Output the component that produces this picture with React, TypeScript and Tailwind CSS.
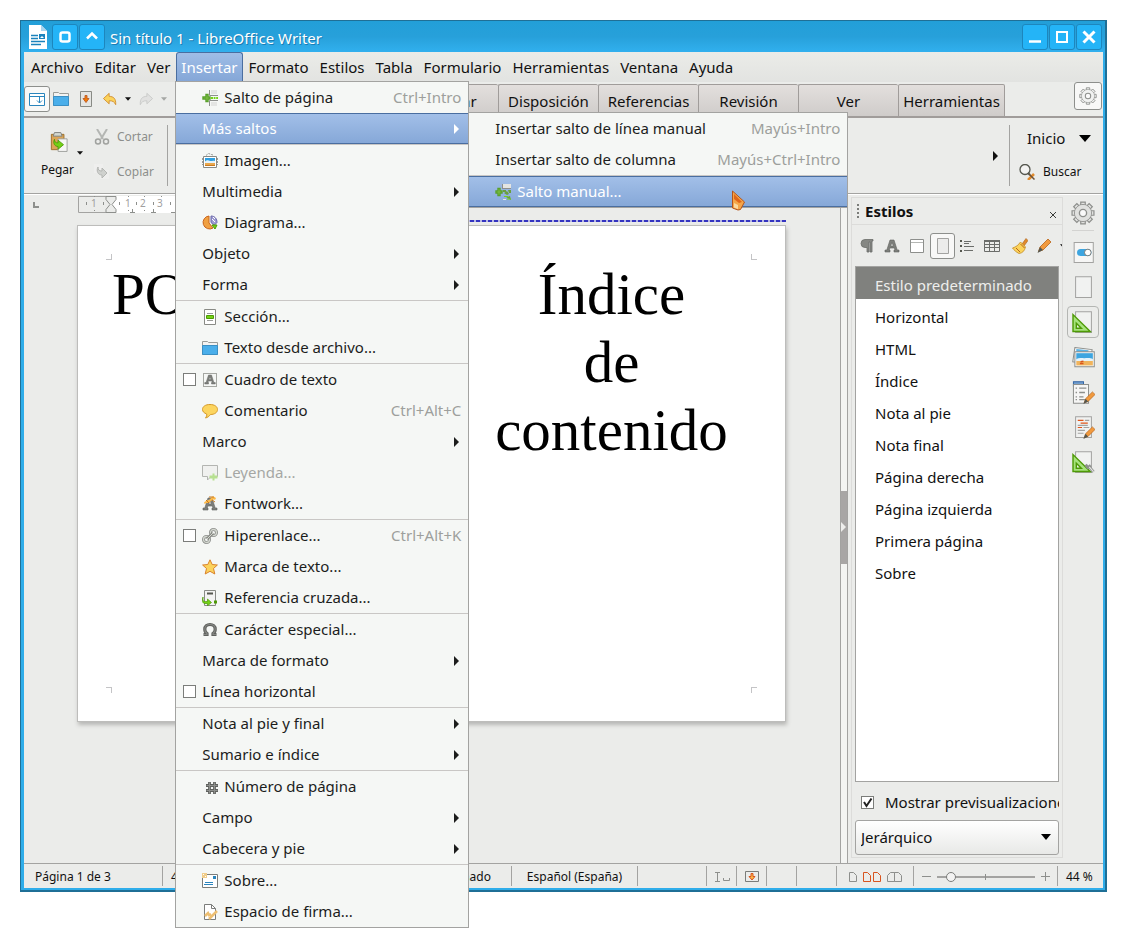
import type { ReactNode } from "react";
import clsx from "clsx";

type IconProps = { children: ReactNode; size?: number; className?: string };

const Icon = ({ children, size = 16, className }: IconProps) => (
  <svg
    width={size}
    height={size}
    viewBox="0 0 16 16"
    fill="none"
    aria-hidden="true"
    className={clsx("shrink-0", className)}
  >
    {children}
  </svg>
);

const PageBreakIcon = () => (
  <Icon>
    <path d="M7.500 0v5.500H16M7.500 16v-5.500H16" stroke="#8d8f8c" />
    <path d="M9 0h6v4H9zM9 12h6v4H9z" fill="#e4e5e3" />
    <path d="M4 4.500h2v2.500h2v2h-2v2.500H4V9H1V7h3z" fill="#8fd14f" stroke="#5aa02c" strokeWidth="1.400" />
    <path d="M9 7h2v2H9zM11.700 7h1.800v2h-1.800zM14.200 7H16v2h-1.800z" fill="#73d216" />
  </Icon>
);

const ManualBreakIcon = () => (
  <Icon>
    <path d="M8 0h8v4H8z" fill="#e4e5e3" />
    <path d="M7.500 0v5M8 4.500h8" stroke="#8d8f8c" />
    <path d="M8 6h3v2H8zM13 6h3v3h-2zM9 9l3-2 2 3-2 1zM8 12l3 1 5 3-1-4-3 1z" fill="#6a9f3d" />
    <path d="M8 15.500h3" stroke="#e4e5e3" />
    <path d="M9 12.500h4M12 15h4" stroke="#73d216" />
    <path d="M3 4.500h2v2.500h2v2H5v2.500H3V9H1V7h2z" fill="#8fd14f" stroke="#5aa02c" strokeWidth="1.400" />
  </Icon>
);

const ImageIcon = () => (
  <Icon>
    <path d="M4 2.500L6.500.5 11 2M.5 5v7M15.500 5v7" stroke="#9a9c99" strokeDasharray="2 1" />
    <path d="M1.500 3.500h13v11h-13z" fill="#fff" stroke="#888a85" />
    <path d="M3 5h10v4H3z" fill="#2e9fe0" />
    <path d="M3 10h10v3H3z" fill="#e9a84e" />
    <path d="M3 8.500c2-2 4-1 5-.5s3-1 5 0V10H3z" fill="#e4f3fb" />
    <path d="M3 12.500h10" stroke="#c97a1e" />
  </Icon>
);

const ChartIcon = () => (
  <Icon>
    <path d="M7 1v7l4 5a6.500 6.500 0 1 1-4-12z" fill="#f0a042" stroke="#c9641c" />
    <path d="M9 1c4 0 6 3 6 6.500-1 1.500-2 2-3 2.500L9 7.500z" fill="#9d9bd0" stroke="#6a68ab" />
    <path d="M11 2l2 2M10 4l3 3" stroke="#fff" />
    <path d="M10 10h5l-2 4z" fill="#73d216" stroke="#4e9a06" />
  </Icon>
);

const SectionIcon = () => (
  <Icon>
    <path d="M2.500.5h11v15h-11z" fill="#fff" stroke="#888a85" />
    <path d="M5 4.500h6M5 11.500h6" stroke="#9a9c99" />
    <path d="M4.500 6.500h7v3h-7z" fill="#73d216" stroke="#4e9a06" />
  </Icon>
);

const FolderIcon = () => (
  <Icon>
    <path d="M.5 14.500v-13h5l1 1h9v12z" fill="#f3f3f2" stroke="#9a9c99" />
    <path d="M.5 5.500h15v9H.5z" fill="#4aaeea" stroke="#3a8fc4" />
  </Icon>
);

const LetterA = () => (
  <path
    fillRule="evenodd"
    d="M6 2h4l3.200 10H15v2h-5v-2h1l-.6-2H5.800l-.6 2H6v2H1v-2h1.800zM8 4.500L6.600 8h2.800z"
    fill="#7d7f7b"
    stroke="#5f615e"
    strokeWidth=".6"
  />
);

const TextBoxIcon = () => (
  <Icon>
    <path d="M1.500 1.500h13v13h-13z" stroke="#55574f" strokeDasharray="1 1" />
    <g transform="translate(2 1.500) scale(.75)">
      <LetterA />
    </g>
  </Icon>
);

const CommentIcon = () => (
  <Icon>
    <path
      d="M8 1.500c4.500 0 7.500 2 7.500 5s-3 5-7 5c-1.500 2-3 3-5 3.500 1-1.500 1.500-2.500 1.200-4C2 10 .5 8.500.5 6.500c0-3 3-5 7.500-5z"
      fill="#fcd55f"
      stroke="#d59a2b"
    />
  </Icon>
);

const CaptionIcon = () => (
  <Icon className="opacity-60">
    <path d="M.5.500h15v11H9l-3.500 3.500v-3.500h-5z" fill="#eeeeec" stroke="#888a85" />
    <path d="M10.500 8.500h2v2h3v3h-3v2h-2v-2h-3v-3h3z" fill="#8fd14f" />
  </Icon>
);

const FontworkIcon = () => (
  <Icon>
    <LetterA />
    <path d="M2 7C3 4 7 5 9 2s3-1 5 0l-1 2c-2-1-3 0-5 2S4 6 3 8z" fill="#fbb848" />
    <path d="M7 1h5M4 4l3 3M10 4l3 2" stroke="#c97a1e" />
  </Icon>
);

const LinkIcon = () => (
  <Icon>
    <circle cx="11.500" cy="4.500" r="3" stroke="#8d8f8c" strokeWidth="3" />
    <circle cx="4.500" cy="11.500" r="3" stroke="#8d8f8c" strokeWidth="3" />
    <circle cx="11.500" cy="4.500" r="3" stroke="#d3d7cf" strokeWidth="1.300" />
    <circle cx="4.500" cy="11.500" r="3" stroke="#d3d7cf" strokeWidth="1.300" />
    <path d="M5 11l6-6" stroke="#888a85" strokeWidth="3" />
    <path d="M5 11l6-6" stroke="#d3d7cf" />
  </Icon>
);

const StarIcon = () => (
  <Icon>
    <path
      d="M8 .8l2.200 4.700 5.200.5-3.900 3.500 1.300 5.500L8 12.300 3.200 15l1.300-5.500L.6 6l5.200-.5z"
      fill="#fbd35c"
      stroke="#d9822b"
      strokeLinejoin="round"
    />
  </Icon>
);

const CrossRefIcon = () => (
  <Icon>
    <path d="M2.500.5h11v15h-11z" fill="#f3f3f2" stroke="#888a85" />
    <path d="M5 3.500h6" stroke="#55574f" strokeWidth="2" />
    <path
      d="M1 7v2.500c0 1.500 1 2 2.500 2h2V9l4 3.500-4 3.300v-2.300H3C1 13.500.3 12 .5 9z"
      fill="#73d216"
      stroke="#4e9a06"
      strokeWidth=".7"
    />
    <path d="M12 10.500h3v3h-3z" fill="#4e9a06" />
  </Icon>
);

const OmegaIcon = () => (
  <Icon>
    <path
      d="M1.500 12.500h3.500v-1C3.500 10.500 2.800 9 2.800 7.200 2.800 4.300 5 2.500 8 2.500s5.200 1.800 5.200 4.700c0 1.800-.7 3.300-2.200 4.300v1h3.500"
      stroke="#5f615e"
      strokeWidth="3.200"
    />
    <path
      d="M2 12.500h3v-1C3.500 10.500 2.800 9 2.800 7.200 2.800 4.300 5 2.500 8 2.500s5.200 1.800 5.200 4.700c0 1.800-.7 3.300-2.200 4.300v1h3"
      stroke="#858783"
      strokeWidth="1.200"
    />
  </Icon>
);

const HashIcon = () => (
  <Icon>
    <path d="M7.500 3v12M12.500 3v12M4 6.500h12M4 11.500h12" stroke="#5f615e" strokeWidth="2.800" />
    <path d="M7.500 3.500v11M12.500 3.500v11M4.500 6.500h11M4.500 11.500h11" stroke="#8d8f8c" />
  </Icon>
);

const EnvelopeIcon = () => (
  <Icon>
    <path d="M.5 1.500h15v13H.5z" fill="#fff" stroke="#7b7d7a" />
    <path d="M0 0h5v5H0z" fill="#f1cd8a" />
    <path d="M1 1h1v1H1zM3 3h1v1H3z" fill="#fff" />
    <path d="M11 3h3v3h-3z" fill="#2a85bd" />
    <path d="M3 9.500h8M2 11.500h9" stroke="#2a85bd" />
  </Icon>
);

const SignatureIcon = () => (
  <Icon>
    <path d="M2.500 15.500V.5h7l4 4v11z" fill="#fff" stroke="#7b7d7a" />
    <path d="M9.500.5v4h4" stroke="#7b7d7a" />
    <path d="M3 12l3-3 1 2 2-1M7 15l8-8" stroke="#edbf72" strokeWidth="2.500" />
  </Icon>
);

const LayoutIcon = () => (
  <Icon>
    <path d="M.5 2.500h15v12H.5z" fill="#fff" stroke="#2a85bd" />
    <path d="M1 5.500h14M10.500 5v7M8 9.500l2.500 2.500L13 9.500" stroke="#2a85bd" />
  </Icon>
);

const SaveIcon = () => (
  <Icon>
    <path d="M2.500.5h11v15h-11z" fill="#e4e5e3" stroke="#888a85" />
    <path d="M7 4.500h2v3h2L8 11.500l-3-4h2z" fill="#f57900" stroke="#c0622c" />
  </Icon>
);

const UndoIcon = ({ className }: { className?: string }) => (
  <Icon size={14} className={className}>
    <path
      d="M7 1.500v3.500c5 0 8 2.500 7.500 9.500-1.500-3.500-3.500-4.500-7.500-4.500v3.500l-6.500-6z"
      fill="#fbd35c"
      stroke="#d08a2a"
    />
  </Icon>
);

const GearIcon = ({ size = 18, fill = "#f1f2f1" }: { size?: number; fill?: string }) => (
  <Icon size={size}>
    {[0, 45, 90, 135].map((a) => (
      <path
        key={a}
        d="M6.500.7h3v14.600h-3z"
        fill={fill}
        stroke="#8d8f8c"
        strokeWidth=".8"
        transform={`rotate(${a} 8 8)`}
      />
    ))}
    <circle cx="8" cy="8" r="5.700" fill={fill} stroke="#8d8f8c" strokeWidth=".6" />
    <circle cx="8" cy="8" r="5.300" fill={fill} />
    <circle cx="8" cy="8" r="2.400" fill="#fafafa" stroke="#8d8f8c" strokeWidth=".9" />
  </Icon>
);

const PencilShape = () => (
  <>
    <path d="M12 1l3 3-8 8-4.500 1.500L4 9z" fill="#f19a3e" stroke="#b8651b" strokeWidth=".8" />
    <path d="M4 9l3 3-5.500 3z" fill="#55574f" />
  </>
);

const PaintIcon = () => (
  <Icon>
    <path d="M10 6l4-5.500 2 2L12 8z" fill="#e08a2c" stroke="#a9601a" strokeWidth=".6" />
    <path
      d="M8.500 4l5 5c-1 4-3 6-6.500 6.500C4 14 2 12 .5 10 4 9 6.500 7 8.500 4z"
      fill="#fbd35c"
      stroke="#c48c20"
      strokeWidth=".8"
    />
    <path d="M8.500 6l4 4M4 10l4 4" stroke="#b8651b" />
  </Icon>
);

const Caret = ({ className }: { className?: string }) => (
  <svg viewBox="0 0 10 6" width="6" height="4" className={clsx("shrink-0", className)} aria-hidden="true">
    <path d="M0 0h10L5 6z" fill="currentColor" />
  </svg>
);

const Arrow = () => (
  <svg viewBox="0 0 5 10" width="5" height="10" className="shrink-0" aria-hidden="true">
    <path d="M0 0l5 5-5 5z" fill="currentColor" />
  </svg>
);

type Entry = {
  label: string;
  icon?: ReactNode;
  check?: boolean;
  shortcut?: string;
  sub?: boolean;
  active?: boolean;
  disabled?: boolean;
};

const insertGroups: Entry[][] = [
  [
    { label: "Salto de página", icon: <PageBreakIcon />, shortcut: "Ctrl+Intro" },
    { label: "Más saltos", sub: true, active: true },
  ],
  [
    { label: "Imagen...", icon: <ImageIcon /> },
    { label: "Multimedia", sub: true },
    { label: "Diagrama...", icon: <ChartIcon /> },
    { label: "Objeto", sub: true },
    { label: "Forma", sub: true },
  ],
  [
    { label: "Sección...", icon: <SectionIcon /> },
    { label: "Texto desde archivo...", icon: <FolderIcon /> },
  ],
  [
    { label: "Cuadro de texto", icon: <TextBoxIcon />, check: true },
    { label: "Comentario", icon: <CommentIcon />, shortcut: "Ctrl+Alt+C" },
    { label: "Marco", sub: true },
    { label: "Leyenda...", icon: <CaptionIcon />, disabled: true },
    { label: "Fontwork...", icon: <FontworkIcon /> },
  ],
  [
    { label: "Hiperenlace...", icon: <LinkIcon />, check: true, shortcut: "Ctrl+Alt+K" },
    { label: "Marca de texto...", icon: <StarIcon /> },
    { label: "Referencia cruzada...", icon: <CrossRefIcon /> },
  ],
  [
    { label: "Carácter especial...", icon: <OmegaIcon /> },
    { label: "Marca de formato", sub: true },
    { label: "Línea horizontal", check: true },
  ],
  [
    { label: "Nota al pie y final", sub: true },
    { label: "Sumario e índice", sub: true },
  ],
  [
    { label: "Número de página", icon: <HashIcon /> },
    { label: "Campo", sub: true },
    { label: "Cabecera y pie", sub: true },
  ],
  [
    { label: "Sobre...", icon: <EnvelopeIcon /> },
    { label: "Espacio de firma...", icon: <SignatureIcon /> },
  ],
];

const breakGroups: Entry[][] = [
  [
    { label: "Insertar salto de línea manual", shortcut: "Mayús+Intro" },
    { label: "Insertar salto de columna", shortcut: "Mayús+Ctrl+Intro" },
  ],
  [{ label: "Salto manual...", icon: <ManualBreakIcon />, active: true }],
];

const MenuRow = ({ entry }: { entry: Entry }) => (
  <button
    type="button"
    disabled={entry.disabled}
    className={clsx(
      "flex h-[31px] w-full items-center px-[7px] text-left",
      entry.active && "border-y border-[#4a6ea0] bg-linear-to-b from-[#a2bfe8] to-[#86a8d8] text-white",
      entry.disabled && "text-[#a5a7a4]"
    )}
  >
    <span className="w-[19px] shrink-0">
      {entry.check && <span className="block size-[13px] border border-[#7b7d7a] bg-white" />}
    </span>
    {entry.icon && <span className="mr-[6px]">{entry.icon}</span>}
    <span className="grow">{entry.label}</span>
    {entry.shortcut && <span className="text-[#9d9f9c]">{entry.shortcut}</span>}
    {entry.sub && (
      <span className="pr-[2px]">
        <Arrow />
      </span>
    )}
  </button>
);

const Menu = ({ groups, className }: { groups: Entry[][]; className?: string }) => (
  <div
    className={clsx(
      "absolute z-10 divide-y divide-[#c9c7c5] border border-[#a3a3a1] bg-[#f5f7f5] whitespace-nowrap text-[#1c1d1c]",
      className
    )}
  >
    {groups.map((group) => (
      <div key={group[0].label}>
        {group.map((entry) => (
          <MenuRow key={entry.label} entry={entry} />
        ))}
      </div>
    ))}
  </div>
);

const TitleButton = ({ label, children }: { label: string; children: ReactNode }) => (
  <button
    type="button"
    aria-label={label}
    className="flex h-[26px] w-[26px] items-center justify-center rounded-[3px] border border-[#1d86bd] bg-[#24b4f7]"
  >
    <svg width="16" height="16" viewBox="0 0 16 16" fill="none" stroke="#fff" strokeWidth="2" aria-hidden="true">
      {children}
    </svg>
  </button>
);

const TitleBar = () => (
  <header className="flex h-[31px] items-center gap-px bg-linear-to-b from-[#229fd8] via-[#27a0da] to-[#31b0ee] pr-[3px] text-white">
    <svg width="18" height="24" viewBox="0 0 18 24" fill="none" className="mr-[4px] ml-[8px]" aria-hidden="true">
      <path d="M0 0h12l6 6v18H0z" fill="#fff" />
      <path d="M12 0l6 6h-6z" fill="#a8d4ee" />
      <path d="M2 10.500h7M2 13.500h7M2 16.500h14M2 19.500h10" stroke="#1b83bd" strokeWidth="1.500" />
      <path d="M10 9h6v5h-6z" fill="#1b83bd" />
      <path d="M11 13l2-2 2 2z" fill="#fff" />
    </svg>
    <TitleButton label="Fijar">
      <rect x="3.500" y="3.500" width="9" height="9" rx="2" strokeWidth="2.500" />
    </TitleButton>
    <TitleButton label="Plegar">
      <path d="M3 9.500l5-5 5 5" strokeWidth="2.500" />
    </TitleButton>
    <h1 className="grow pt-[3px] pl-[4px] [text-shadow:1px_1px_0_#1a7db3]">Sin título 1 - LibreOffice Writer</h1>
    <TitleButton label="Minimizar">
      <path d="M2 12.500h12" strokeWidth="2.500" />
    </TitleButton>
    <TitleButton label="Maximizar">
      <rect x="3" y="3" width="10" height="10" />
    </TitleButton>
    <TitleButton label="Cerrar">
      <path d="M2.500 2.500l11 11M13.500 2.500l-11 11" strokeWidth="3" />
    </TitleButton>
  </header>
);

const menus = [
  "Archivo",
  "Editar",
  "Ver",
  "Insertar",
  "Formato",
  "Estilos",
  "Tabla",
  "Formulario",
  "Herramientas",
  "Ventana",
  "Ayuda",
];

const MenuBar = () => (
  <nav className="flex h-[30px] gap-px bg-linear-to-b from-[#ebece8] to-[#e2e3e1] pl-[2px]">
    {menus.map((name) => {
      const open = name === "Insertar";
      return (
        <div key={name} className="relative">
          <button
            type="button"
            className={clsx(
              "h-full",
              open
                ? "rounded-t-[3px] border border-b-0 border-[#4a6ea0] bg-linear-to-b from-[#9fbde6] to-[#84a6d7] px-[4px] text-white"
                : "px-[5px]"
            )}
          >
            {name}
          </button>
          {open && (
            <>
              <Menu groups={insertGroups} className="top-[29px] -left-px w-[294px]" />
              <Menu groups={breakGroups} className="top-[60px] left-[292px] w-[380px]" />
            </>
          )}
        </div>
      );
    })}
  </nav>
);

const tabs = ["Insertar", "Disposición", "Referencias", "Revisión", "Ver"];

const tabStyle =
  "h-[34px] shrink-0 rounded-t-[2px] border border-b-2 border-[#a09c9a] bg-linear-to-b from-[#e3dfdd] to-[#cfccca] pt-[2px]";

const TabRow = () => (
  <div className="flex h-[36px] items-end shadow-[inset_0_-2px_0_#a09c9a]">
    <div className="flex h-full w-[374px] shrink-0 items-center pb-[2px]">
      <button
        type="button"
        aria-label="Diseño"
        className="flex size-[26px] items-center justify-center rounded-[3px] border border-[#8d8f8c] bg-[#f8f8f7]"
      >
        <LayoutIcon />
      </button>
      <button type="button" aria-label="Abrir" className="ml-[3px]">
        <FolderIcon />
      </button>
      <button type="button" aria-label="Guardar" className="ml-[9px]">
        <SaveIcon />
      </button>
      <button type="button" aria-label="Deshacer" className="ml-[9px] flex items-center gap-[8px]">
        <UndoIcon />
        <Caret />
      </button>
      <button type="button" aria-label="Rehacer" className="ml-[8px] flex items-center gap-[8px] text-[#a5a7a4]">
        <UndoIcon className="-scale-x-100 opacity-40 grayscale" />
        <Caret />
      </button>
    </div>
    {tabs.map((tab) => (
      <button key={tab} type="button" className={clsx(tabStyle, "w-[100px] border-r-0")}>
        {tab}
      </button>
    ))}
    <button type="button" className={clsx(tabStyle, "w-[107px]")}>
      Herramientas
    </button>
    <button
      type="button"
      aria-label="Opciones"
      className="mr-px mb-auto ml-auto flex size-[28px] items-center justify-center rounded-[3px] border border-[#8d8f8c] bg-[#f8f8f7]"
    >
      <GearIcon />
    </button>
  </div>
);

const Toolbar = () => (
  <div className="flex h-[76px] border-b border-[#a3a3a1] py-[7px] text-[12px] shadow-[0_1px_0_#fff]">
    <button type="button" className="relative ml-[12px] flex w-[43px] flex-col items-center pt-[6px]">
      <svg width="18" height="22" viewBox="0 0 20 24" fill="none" className="ml-[2px]" aria-hidden="true">
        <path d="M1.500 3.500h14v17h-14z" fill="#dca557" stroke="#9a6b24" />
        <path d="M5 1.500h7l1.500 4h-10z" fill="#d3d7cf" stroke="#7b7d7a" />
        <path d="M9 8.500h10v14H9z" fill="#f6f6f5" stroke="#9a9c99" />
        <path d="M5 9c0 3 1 4 4 4v-3l6 5-6 5v-3c-4 0-6-4-4-8z" fill="#73d216" stroke="#4e9a06" />
      </svg>
      <span className="mt-[8px]">Pegar</span>
      <Caret className="absolute top-[26px] right-[-4px]" />
    </button>
    <div className="flex w-[88px] flex-col justify-between pt-[3px] pb-[5px] pl-[15px] text-[#8d8f8c]">
      <button type="button" disabled className="flex items-center gap-[7px]">
        <Icon>
          <path d="M3 0l6 10M13 0L7 10" stroke="#b4b6b3" strokeWidth="2" />
          <circle cx="4" cy="12.500" r="2.500" stroke="#a0a29f" strokeWidth="1.500" />
          <circle cx="12" cy="12.500" r="2.500" stroke="#a0a29f" strokeWidth="1.500" />
        </Icon>
        Cortar
      </button>
      <button type="button" disabled className="flex items-center gap-[7px]">
        <Icon>
          <path d="M0 0h9v9H0zM6 6h9v9H6z" fill="#efefee" />
          <path d="M4 3c0 3 1 4 4 4V4l5 5-5 5v-3C4 11 2 7 4 3z" fill="#cfd1ce" stroke="#b4b6b3" />
        </Icon>
        Copiar
      </button>
    </div>
    <div className="w-px bg-[#a3a3a1]" />
    <button type="button" aria-label="Más" className="ml-auto">
      <Arrow />
    </button>
    <div className="mr-[9px] ml-[11px] w-px bg-[#a3a3a1]" />
    <div className="flex w-[84px] flex-col justify-between">
      <button type="button" className="flex items-center justify-between pt-[2px] pr-[12px] pl-[8px] text-[15px]">
        Inicio
        <svg width="12" height="7" viewBox="0 0 12 7" aria-hidden="true">
          <path d="M0 0h12L6 7z" />
        </svg>
      </button>
      <button type="button" className="flex items-center gap-[8px] pb-[5px]">
        <Icon>
          <circle cx="6" cy="5.500" r="5" fill="#f3f3f2" stroke="#55574f" strokeWidth="1.300" />
          <path d="M9 9l2 2" stroke="#55574f" strokeWidth="2" />
          <path d="M9 16l6-6" stroke="#e08a2c" strokeWidth="2.500" />
          <path d="M10 10l5.500 5.500" stroke="#6b5138" strokeWidth="1.500" />
        </Icon>
        Buscar
      </button>
    </div>
  </div>
);

const Ruler = () => (
  <svg width="340" height="18" className="block" aria-hidden="true">
    <path d="M0 0h340v17H0z" fill="#fff" />
    <path d="M.5.5h32v16H.5z" fill="#ebecea" stroke="#a3a3a1" />
    <path d="M28 .5h10v3l-4 5 4 5v3H28v-3l4-5-4-5z" fill="#ebecea" stroke="#8d8f8c" />
    <path d="M8.500 6v3M25.500 6v3M41.500 6v3M58.500 6v3M75.500 6v3M92.500 6v3" stroke="#8d8f8c" />
    <path
      d="M16.500 0v1M16.500 14v1M50.500 0v1M66.500 0v1M83.500 0v1M50.500 14v1M66.500 14v1M52 16.500h5M54.500 13v3M73 16.500h5M75.500 13v3M93 16.500h5"
      stroke="#8d8f8c"
    />
    <g fontSize="10" fill="#a09e9e">
      <text x="13" y="11">1</text>
      <text x="47" y="11">1</text>
      <text x="62" y="11">2</text>
      <text x="79" y="11">3</text>
    </g>
  </svg>
);

const Corner = ({ className }: { className: string }) => (
  <span className={clsx("absolute size-[6px] border-[#c4c4c6]", className)} />
);

const Document = () => (
  <main className="min-w-0 grow border-r border-[#a3a3a1]">
    <div className="flex gap-[39px] pt-px pl-[9px]">
      <span className="mt-[6px] size-[6px] border-b-2 border-l-2 border-[#8d8f8c]" />
      <Ruler />
    </div>
    <div className="ml-[53px] w-[709px]">
      <div className="mt-[6px] ml-auto h-[2px] w-[340px] bg-[repeating-linear-gradient(90deg,#3434c0_0px,#3434c0_4px,#b9b9e4_4px,#b9b9e4_6px)]" />
      <article className="mt-[3px] h-[497px] border border-[#bdbdbb] bg-white px-[34px] py-[34px] font-['Liberation_Serif',serif] text-[59px] leading-[68px] text-black shadow-[1px_3px_4px_#b8b8b6]">
        <div className="relative flex h-full">
          <Corner className="-top-[6px] -left-[6px] border-r border-b" />
          <Corner className="-top-[6px] -right-[6px] border-b border-l" />
          <Corner className="-bottom-[6px] -left-[6px] border-t border-r" />
          <Corner className="-right-[6px] -bottom-[6px] border-t border-l" />
          <p className="w-[360px]">PO</p>
          <p className="grow text-center">
            Índice
            <br />
            de
            <br />
            contenido
          </p>
        </div>
      </article>
    </div>
  </main>
);

const pageStyles = [
  "Estilo predeterminado",
  "Horizontal",
  "HTML",
  "Índice",
  "Nota al pie",
  "Nota final",
  "Página derecha",
  "Página izquierda",
  "Primera página",
  "Sobre",
];

const StyleKinds = () => (
  <div className="flex h-[41px] items-center overflow-hidden pl-[7px]">
    <button type="button" aria-label="Estilos de párrafo" className="flex w-[25px] shrink-0">
      <Icon>
        <path
          d="M6 1.500h8v1.500h-1V14h-2V4h-1v10H8V9.500H6a4 4 0 0 1 0-8z"
          fill="#858783"
          stroke="#6b6d6a"
          strokeWidth=".8"
        />
      </Icon>
    </button>
    <button type="button" aria-label="Estilos de caracteres" className="flex w-[25px] shrink-0">
      <Icon>
        <LetterA />
      </Icon>
    </button>
    <button type="button" aria-label="Estilos de marcos" className="flex w-[21px] shrink-0">
      <Icon>
        <path d="M1.500 1.500h13v13h-13z" fill="#fff" stroke="#8d8f8c" />
        <path d="M2 4.500h12" stroke="#b4b6b3" />
      </Icon>
    </button>
    <button
      type="button"
      aria-label="Estilos de página"
      aria-pressed="true"
      className="mr-[4px] flex h-[26px] w-[25px] shrink-0 items-center justify-center rounded-[3px] border border-[#8d8f8c] bg-[#f8f8f7]"
    >
      <Icon>
        <path d="M2.500.5h11v15h-11z" fill="#ececeb" stroke="#a3a3a1" />
      </Icon>
    </button>
    <button type="button" aria-label="Estilos de lista" className="flex w-[25px] shrink-0">
      <Icon>
        <path d="M1 3h2M1 8h2M1 13h2" stroke="#55574f" strokeWidth="2" />
        <path d="M5 3.500h7M5 5.500h5M5 8.500h10M5 12.500h9" stroke="#6b6d6a" />
      </Icon>
    </button>
    <button type="button" aria-label="Estilos de tabla" className="mr-[3px] flex w-[25px] shrink-0">
      <Icon>
        <path d="M.5 2.500h15v11H.5zM5.500 3v10M10.500 3v10M1 6.500h14M1 9.500h14" stroke="#6b6d6a" />
        <path d="M0 2h16v2H0z" fill="#6b6d6a" />
      </Icon>
    </button>
    <button type="button" aria-label="Modo relleno" className="flex w-[24px] shrink-0">
      <PaintIcon />
    </button>
    <button type="button" aria-label="Acciones de estilo" className="flex shrink-0 items-center gap-[8px]">
      <Icon>
        <PencilShape />
      </Icon>
      <Caret />
    </button>
  </div>
);

const StylesPanel = () => (
  <section className="mt-[2px] mb-[5px] ml-[3px] flex w-[212px] flex-col border border-[#dcdcda]">
    <header className="flex h-[27px] items-center border-b border-[#dcdcda] px-[5px]">
      <span className="mr-[6px] h-[14px] border-l-2 border-dotted border-[#7b7d7a]" />
      <h2 className="grow font-bold">Estilos</h2>
      <button type="button" aria-label="Cerrar panel" className="pt-[8px]">
        <svg width="8" height="8" viewBox="0 0 8 8" stroke="#3a3c39" aria-hidden="true">
          <path d="M1 1l6 6M7 1L1 7" />
        </svg>
      </button>
    </header>
    <StyleKinds />
    <ul className="mx-[3px] grow border border-[#a3a3a1] bg-white">
      {pageStyles.map((name, i) => (
        <li key={name}>
          <button
            type="button"
            className={clsx("h-[32px] w-full pt-[5px] pl-[19px] text-left", i === 0 && "bg-[#80817e] text-[#eeeeec]")}
          >
            {name}
          </button>
        </li>
      ))}
    </ul>
    <label className="mx-[3px] flex h-[38px] items-center overflow-hidden pt-[3px] pl-[6px] whitespace-nowrap">
      <input
        type="checkbox"
        defaultChecked
        className="peer size-[13px] shrink-0 appearance-none border border-[#7b7d7a] bg-white"
      />
      <svg
        width="13"
        height="13"
        viewBox="0 0 13 13"
        fill="none"
        className="-ml-[13px] hidden shrink-0 peer-checked:block"
        aria-hidden="true"
      >
        <path d="M3 6l2.500 4L10.500 2.500" stroke="#222" strokeWidth="2" />
      </svg>
      <span className="pl-[11px]">Mostrar previsualizaciones</span>
    </label>
    <div className="relative mx-[3px] mb-[2px]">
      <select
        aria-label="Filtro de estilos"
        className="h-[35px] w-full appearance-none rounded-[3px] border border-[#a3a3a1] bg-linear-to-b from-white to-[#e8e9e7] pl-[5px]"
      >
        <option>Jerárquico</option>
      </select>
      <svg width="10" height="6" viewBox="0 0 10 6" className="absolute top-[14px] right-[8px]" aria-hidden="true">
        <path d="M0 0h10L5 6z" />
      </svg>
    </div>
  </section>
);

const Sheet = () => <path d="M2.500.5h11v14.500h-11z" fill="#f1f2f1" stroke="#a3a3a1" strokeWidth=".7" />;

const SetSquare = () => (
  <path fillRule="evenodd" d="M.7 2.500v11.800h12zM3 8.500l3.500 3.500H3z" fill="#a6e27c" stroke="#4e9a06" />
);

const SmallPencil = () => (
  <g transform="translate(7 7) scale(.6)">
    <PencilShape />
  </g>
);

const deckIcons = [
  {
    label: "Propiedades",
    art: (
      <>
        <path d="M1.500 1h13.300v14H1.500z" fill="#f6f6f5" stroke="#a3a3a1" strokeWidth=".7" />
        <rect x="3.500" y="5.500" width="10" height="5" rx="2.500" fill="#3da5e0" />
        <circle cx="11" cy="8" r="2.300" fill="#fff" stroke="#6b6d6a" strokeWidth=".6" />
      </>
    ),
  },
  { label: "Página", art: <Sheet /> },
  {
    label: "Estilos",
    active: true,
    art: (
      <>
        <Sheet />
        <SetSquare />
      </>
    ),
  },
  {
    label: "Galería",
    art: (
      <>
        <path d="M2 1l12 1.500-1.500 10L.5 11z" fill="#f6f6f5" stroke="#8d8f8c" strokeWidth=".7" />
        <path d="M3 2l8.500 1-.5 2H3z" fill="#5ab4e6" />
        <path d="M2 4h13.500v10.500H2z" fill="#f6f6f5" stroke="#8d8f8c" strokeWidth=".7" />
        <path d="M3 5h11.500v4.500H3z" fill="#3da5e0" />
        <path d="M3 10h11.500v3.500H3z" fill="#f0b45c" />
        <path d="M3 9c2-1 4-.5 5.500-.5s4-.5 6 .5v1.500H3z" fill="#e4f3fb" />
        <path d="M6 11l2-.5M5.500 12.200h2.500" stroke="#d9541e" />
      </>
    ),
  },
  {
    label: "Navegador",
    art: (
      <>
        <path d="M1 .5h7v3H1z" fill="#729fcf" stroke="#3465a4" strokeWidth=".7" />
        <path d="M1 2.500h10.500v13H1z" fill="#f6f6f5" stroke="#8d8f8c" strokeWidth=".7" />
        <path
          d="M2.500 5h1M2.500 8h1M2.500 11h1M2.500 13h1M5 5h5M5 8h4M5 11h3M5 13h4"
          stroke="#8d8f8c"
          strokeWidth=".9"
        />
        <SmallPencil />
      </>
    ),
  },
  {
    label: "Gestionar cambios",
    art: (
      <>
        <Sheet />
        <path d="M4 3h4M6 5h5M4 8h3" stroke="#e0561b" strokeWidth=".8" />
        <path d="M9 3h3M4 6.500h7M8 8h4M4 10h5M4 12h4" stroke="#a3a3a1" strokeWidth=".8" />
        <SmallPencil />
      </>
    ),
  },
  {
    label: "Inspector de estilos",
    art: (
      <>
        <Sheet />
        <SetSquare />
        <path d="M9.500 9.500l1.500 2 2-1.500M12 11l3 3.500" stroke="#8d8f8c" strokeWidth="2" />
        <path d="M12 11l3 3.500" stroke="#e4e5e3" strokeWidth=".8" />
      </>
    ),
  },
];

const Deck = () => (
  <aside className="flex w-[40px] flex-col items-center pt-[6px]">
    <button type="button" aria-label="Configuración de la barra lateral">
      <GearIcon size={24} fill="#e0e1df" />
    </button>
    <div className="mt-[5px] mb-[5px] h-px w-[22px] bg-[#d3d3d1]" />
    <div className="flex flex-col gap-[3px]">
      {deckIcons.map(({ label, active, art }) => (
        <button
          key={label}
          type="button"
          aria-label={label}
          className={clsx(
            "flex size-[32px] items-center justify-center rounded-[4px] border",
            active ? "border-[#b4b6b3]" : "border-transparent"
          )}
        >
          <Icon size={23}>{art}</Icon>
        </button>
      ))}
    </div>
  </aside>
);

const Sidebar = () => (
  <div className="flex shrink-0">
    <div className="flex w-[7px] flex-col justify-center border-r border-[#a3a3a1] bg-[#f3f4f2] pb-[4px]">
      <button
        type="button"
        aria-label="Ocultar barra lateral"
        className="flex h-[73px] w-[6px] items-center bg-[#a8a6a5] text-[#eeeeec]"
      >
        <Arrow />
      </button>
    </div>
    <StylesPanel />
    <Deck />
  </div>
);

const Cell = ({ children, className }: { children?: ReactNode; className?: string }) => (
  <div className={clsx("flex h-[20px] shrink-0 items-center border-r border-[#a3a3a1] pt-px", className)}>
    {children}
  </div>
);

const StatusBar = () => (
  <footer className="flex h-[25px] items-center overflow-hidden border-t border-[#a3a3a1] text-[12px] whitespace-nowrap">
    <Cell className="w-[139px] pl-[11px]">Página 1 de 3</Cell>
    <Cell className="w-[180px] pl-[8px]">47 palabras</Cell>
    <Cell className="w-[169px] justify-end pr-[20px]">Estilo predeterminado</Cell>
    <Cell className="w-[126px] justify-center">Español (España)</Cell>
    <Cell className="min-w-0 flex-1" />
    <Cell className="w-[30px] justify-center">
      <Icon>
        <path d="M1 3.500h5M3.500 3.500v9M1 12.500h5M9.500 9v2.500h6V9" stroke="#8d8f8c" />
      </Icon>
    </Cell>
    <Cell className="w-[30px] justify-center">
      <Icon>
        <path d="M1.500 2.500h13v10h-13z" stroke="#7b7d7a" />
        <path d="M7 4.500h2v3h2L8 11l-3-3.500h2z" fill="#fbb848" stroke="#d9541e" />
      </Icon>
    </Cell>
    <Cell className="w-[30px]" />
    <Cell className="w-[40px]" />
    <Cell className="w-[77px] justify-center">
      <svg width="56" height="12" viewBox="0 0 56 12" fill="none" aria-label="Vista de páginas">
        <path d="M2.500 1.500h4l3 3v6h-7z" stroke="#8d8f8c" />
        <path d="M16.500 1.500h4l3 3v6h-7zM26.500 1.500h4l3 3v6h-7z" stroke="#d9541e" />
        <path d="M47.500 1.500h-4l-3 3v6h7zM47.500 1.500h4l3 3v6h-7z" stroke="#8d8f8c" />
      </svg>
    </Cell>
    <Cell className="w-[144px] justify-center gap-[6px] text-[#8d8f8c]">
      <button type="button" aria-label="Reducir" className="h-px w-[9px] bg-[#8d8f8c]" />
      <div className="relative flex">
        <input
          type="range"
          min="20"
          max="185"
          defaultValue="38"
          aria-label="Escala"
          className="h-[2px] w-[98px] appearance-none bg-[#a3a3a1] [&::-webkit-slider-thumb]:size-[10px] [&::-webkit-slider-thumb]:appearance-none [&::-webkit-slider-thumb]:rounded-full [&::-webkit-slider-thumb]:border [&::-webkit-slider-thumb]:border-[#7b7d7a] [&::-webkit-slider-thumb]:bg-[#f3f3f2]"
        />
        <span className="absolute -top-[2px] left-[48px] h-[6px] w-px bg-[#8d8f8c]" />
      </div>
      <button type="button" aria-label="Ampliar">
        <svg width="9" height="9" viewBox="0 0 9 9" stroke="#8d8f8c" aria-hidden="true">
          <path d="M0 4.500h9M4.500 0v9" />
        </svg>
      </button>
    </Cell>
    <span className="w-[45px] pt-px pl-[8px]">44 %</span>
  </footer>
);

const App = () => {
  return (
    <div className="flex min-h-screen bg-white px-5 pt-5 pb-14 font-['Noto_Sans',sans-serif] text-[15px] text-[#111]">
      <div className="flex min-w-0 grow flex-col bg-[#1f6f96] pt-px pr-[2px] pb-[2px] pl-px">
        <div className="flex grow flex-col bg-[#2fadea] pb-[2px]">
          <TitleBar />
          <div className="mr-[2px] ml-[3px] flex min-w-0 grow flex-col bg-[#ebecea]">
            <MenuBar />
            <TabRow />
            <Toolbar />
            <div className="flex grow pt-px">
              <Document />
              <Sidebar />
            </div>
            <StatusBar />
          </div>
        </div>
      </div>
      <svg
        width="16"
        height="22"
        viewBox="0 0 16 22"
        className="pointer-events-none absolute top-[190px] left-[731px] z-20"
        aria-hidden="true"
      >
        <path d="M1.500 1l12 11-4 7.500-2.500.5-5.500-2z" fill="#f4a64a" stroke="#b5541a" />
        <path d="M3 4l8 8-3 1-5-4z" fill="#e0661a" />
        <path d="M3 13l4 2v4l-4-1.500z" fill="#fbd9a0" />
      </svg>
    </div>
  );
};

export default App;
